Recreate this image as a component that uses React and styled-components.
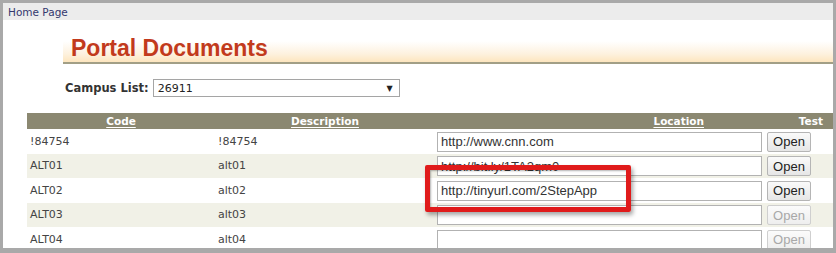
import React from "react";
import styled, { createGlobalStyle } from "styled-components";

const GlobalStyle = createGlobalStyle`
  html, body {
    margin: 0;
    padding: 0;
    background: #a9a9a9;
  }
  * {
    box-sizing: border-box;
  }
`;

const rows = [
  { code: "!84754", desc: "!84754", url: "http://www.cnn.com", active: true },
  { code: "ALT01", desc: "alt01", url: "http://bit.ly/1TA2qm0", active: true },
  { code: "ALT02", desc: "alt02", url: "http://tinyurl.com/2StepApp", active: true },
  { code: "ALT03", desc: "alt03", url: "", active: false },
  { code: "ALT04", desc: "alt04", url: "", active: false },
];

const App = () => {
  return (
    <>
      <GlobalStyle />
      <Frame>
        <Page>
          <TopBar>
            <a href="#home">Home Page</a>
          </TopBar>
          <Content>
            <TitleBlock>
              <h1>Portal Documents</h1>
            </TitleBlock>
            <CampusRow>
              <label>Campus List:</label>
              <Select>
                <span>26911</span>
                <Arrow>▼</Arrow>
              </Select>
            </CampusRow>
            <TableWrap>
              <HeaderRow>
                <HeadCell align="center"><u>Code</u></HeadCell>
                <HeadCell align="center"><u>Description</u></HeadCell>
                <HeadCell align="right" pad={60}><u>Location</u></HeadCell>
                <HeadCell align="right" pad={10}>Test</HeadCell>
              </HeaderRow>
              {rows.map((r, i) => (
                <Row key={r.code} alt={i % 2 === 1}>
                  <Cell>{r.code}</Cell>
                  <Cell>{r.desc}</Cell>
                  <Cell>
                    <UrlInput>{r.url}</UrlInput>
                  </Cell>
                  <Cell>
                    <OpenButton disabled={!r.active}>Open</OpenButton>
                  </Cell>
                </Row>
              ))}
              <Highlight />
            </TableWrap>
          </Content>
        </Page>
      </Frame>
    </>
  );
};

const Frame = styled.div`
  width: 836px;
  height: 253px;
  padding: 3px 3px 5px 3px;
  background: #a9a9a9;
  overflow: hidden;
`;

const Page = styled.div`
  width: 100%;
  height: 100%;
  background: #ffffff;
  overflow: hidden;
`;

const TopBar = styled.div`
  height: 17px;
  background: #ececec;
  padding-left: 5px;
  display: flex;
  align-items: center;

  a {
    font-family: "DejaVu Sans", Verdana, sans-serif;
    font-size: 10.5px;
    color: #34386e;
    text-decoration: none;
  }
`;

const Content = styled.div`
  display: flex;
  flex-direction: column;
  padding-top: 10px;

  & > * {
    flex-shrink: 0;
  }
`;

const TitleBlock = styled.div`
  margin-left: 60px;
  height: 34px;
  background: linear-gradient(to bottom, #ffffff 0%, #ffffff 35%, #fdf1de 75%, #fde5be 100%);
  border-bottom: 2px solid #a29f86;
  display: flex;
  align-items: flex-end;

  h1 {
    margin: 0 0 0 8px;
    font-family: "Liberation Sans", Arial, sans-serif;
    font-weight: bold;
    font-size: 23px;
    color: #c23a1c;
  }
`;

const CampusRow = styled.div`
  display: flex;
  align-items: center;
  gap: 4px;
  margin: 15px 0 0 62px;
  height: 18px;

  label {
    font-family: "DejaVu Sans", Tahoma, sans-serif;
    font-weight: bold;
    font-size: 11.5px;
    color: #333333;
  }
`;

const Select = styled.div`
  width: 247px;
  height: 18px;
  border: 1px solid #a5a5a5;
  background: #ffffff;
  display: flex;
  align-items: center;
  justify-content: space-between;
  padding: 0 6px 0 4px;
  font-family: "DejaVu Sans", Tahoma, sans-serif;
  font-size: 11px;
  color: #222222;
`;

const Arrow = styled.span`
  font-size: 8px;
  color: #222222;
`;

const TableWrap = styled.div`
  position: relative;
  margin: 16px 0 0 24px;
`;

const columns = "188px 220px 329px 1fr";

const HeaderRow = styled.div`
  display: grid;
  grid-template-columns: ${columns};
  height: 16px;
  background: #8b8871;
`;

const HeadCell = styled.div`
  text-align: ${(p) => p.align};
  padding-right: ${(p) => p.pad || 0}px;
  font-family: "DejaVu Sans", Verdana, sans-serif;
  font-weight: bold;
  font-size: 10.5px;
  line-height: 16px;
  color: #ffffff;

  u {
    text-decoration-thickness: 1px;
    text-underline-offset: 2px;
  }
`;

const Row = styled.div`
  display: grid;
  grid-template-columns: ${columns};
  height: 24.5px;
  background: ${(p) => (p.alt ? "#f1f1e7" : "#ffffff")};
`;

const Cell = styled.div`
  display: flex;
  align-items: center;
  padding-left: 3px;
  font-family: "DejaVu Sans", Verdana, sans-serif;
  font-size: 11px;
  color: #444444;

  &:nth-child(3),
  &:nth-child(4) {
    align-items: flex-end;
    padding-bottom: 2px;
  }
`;

const UrlInput = styled.div`
  width: 325px;
  height: 20px;
  margin-left: -1px;
  border: 1px solid #b2b2b2;
  background: #ffffff;
  padding: 0 3px;
  display: flex;
  align-items: center;
  font-family: "Liberation Sans", Arial, sans-serif;
  font-size: 13px;
  color: #333333;
  white-space: nowrap;
  overflow: hidden;
`;

const OpenButton = styled.button`
  width: 44px;
  height: 20px;
  margin-left: 0;
  padding: 0;
  border: 1px solid #b5b5b5;
  border-radius: 2px;
  background: linear-gradient(to bottom, #fafafa, #e6e6e6);
  font-family: "Liberation Sans", Arial, sans-serif;
  font-size: 13px;
  color: #222222;

  &:disabled {
    color: #a8a8a8;
    border-color: #cfcfcf;
    background: linear-gradient(to bottom, #fbfbfb, #eeeeee);
  }
`;

const Highlight = styled.div`
  position: absolute;
  left: 398px;
  top: 52px;
  width: 206px;
  height: 47px;
  border: 5px solid #e01b1b;
  border-radius: 2px;
  box-shadow: 2px 3px 4px rgba(0, 0, 0, 0.35), inset 1px 1px 2px rgba(0, 0, 0, 0.3);
  pointer-events: none;
`;

export default App;
